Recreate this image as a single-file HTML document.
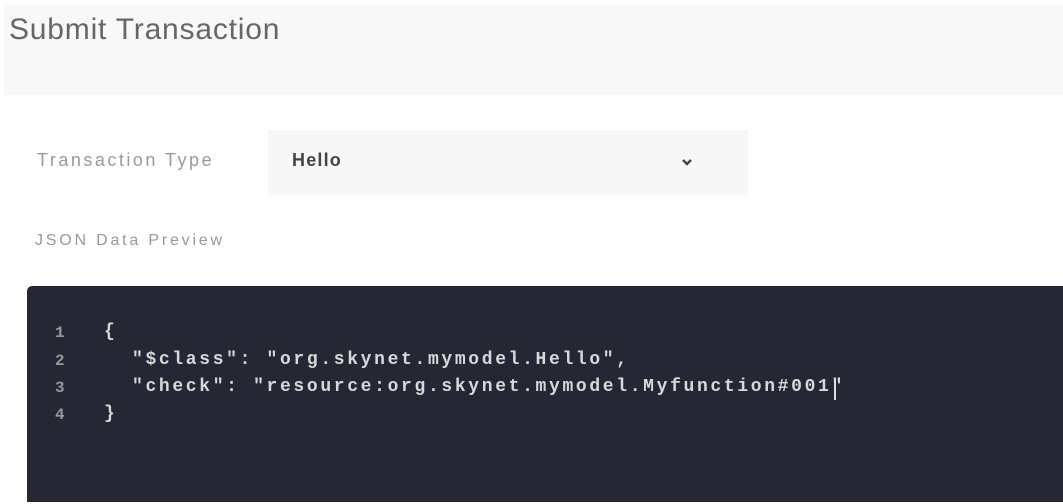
<!DOCTYPE html>
<html><head><meta charset="utf-8"><style>
body{margin:0;width:1063px;height:504px;background:#fff;position:relative;overflow:hidden;font-family:"Liberation Sans",sans-serif}
.hdr{position:absolute;left:4px;top:5px;width:1059px;height:90px;background:#f8f8f8}
.title{position:absolute;left:9px;top:13px;font-size:30px;color:#666;letter-spacing:0.8px}
.lab{position:absolute;left:37px;top:150px;font-size:18px;color:#999;letter-spacing:2.5px}
.sel{position:absolute;left:268px;top:130px;width:480px;height:65px;background:#f7f7f7}
.hello{position:absolute;left:292px;top:150px;font-size:18px;font-weight:bold;color:#444;letter-spacing:1.2px}
.json{position:absolute;left:35px;top:232px;font-size:16px;color:#999;letter-spacing:2.8px}
.code{position:absolute;left:27px;top:286px;width:1040px;height:216px;background:#252734;border-radius:5px 0 0 0}
.ln{position:absolute;font-family:"Liberation Mono",monospace;font-size:18px;font-weight:bold;color:#d8d8d8;white-space:pre;letter-spacing:2.65px}
.n{position:absolute;left:55px;font-family:"Liberation Mono",monospace;font-size:16px;font-weight:bold;color:#999}
</style></head><body>
<div class="hdr"></div>
<div class="title">Submit Transaction</div>
<div class="lab">Transaction Type</div>
<div class="sel"></div>
<div class="hello">Hello</div>
<svg style="position:absolute;left:681px;top:158px" width="12" height="9" viewBox="0 0 12 9"><path d="M2 2l4 4 4-4" fill="none" stroke="#444" stroke-width="2.5"/></svg>
<div class="json">JSON Data Preview</div>
<div class="code"></div>
<div class="n" style="top:324px">1</div>
<div class="n" style="top:352px">2</div>
<div class="n" style="top:379px">3</div>
<div class="n" style="top:406px">4</div>
<div class="ln" style="left:104px;top:322px">{</div>
<div class="ln" style="left:132px;top:350px">"$class": "org.skynet.mymodel.Hello",</div>
<div class="ln" style="left:132px;top:377px">"check": "resource:org.skynet.mymodel.Myfunction#001"</div>
<div style="position:absolute;left:834px;top:378px;width:2px;height:22px;background:#ddd"></div>
<div class="ln" style="left:104px;top:404px">}</div>
</body></html>
